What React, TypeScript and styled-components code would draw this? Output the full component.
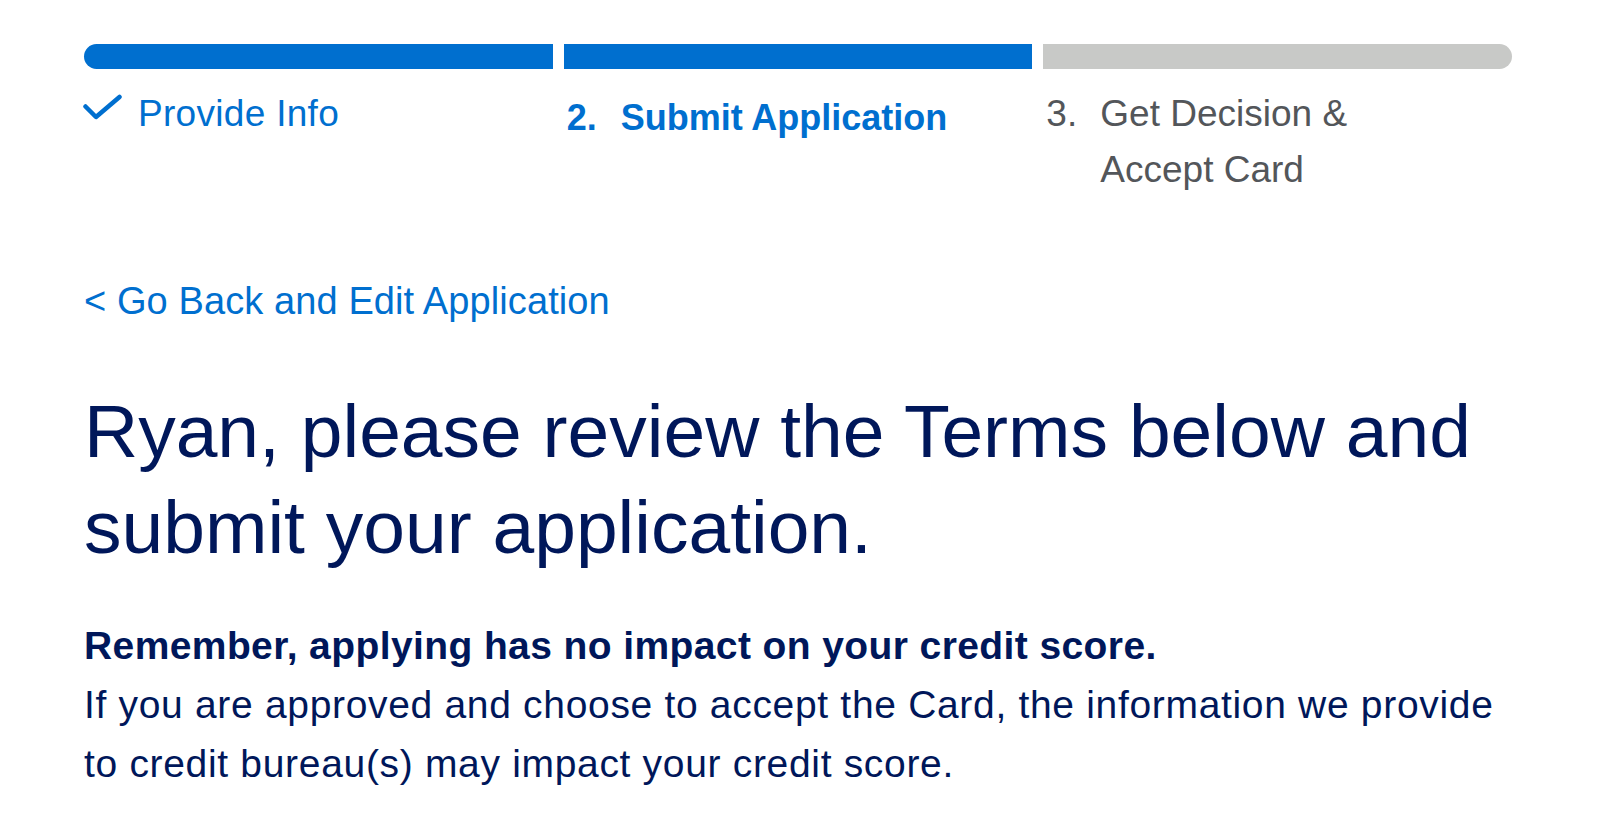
import React from "react";
import styled, { createGlobalStyle } from "styled-components";

const GlobalStyle = createGlobalStyle`
  html, body {
    margin: 0;
    padding: 0;
    background: #ffffff;
  }
  body {
    font-family: "Liberation Sans", Arial, sans-serif;
    -webkit-font-smoothing: antialiased;
  }
`;

const Page = styled.div`
  padding: 44px 88px 0 84px;
`;

const Steps = styled.div`
  display: grid;
  grid-template-columns: repeat(3, 1fr);
  column-gap: 11px;
`;

const Step = styled.div`
  display: flex;
  flex-direction: column;
`;

const Bar = styled.div<{ $done: boolean; $first?: boolean; $last?: boolean }>`
  height: 25px;
  background: ${(p) => (p.$done ? "#006fcf" : "#c8c9c7")};
  border-radius: ${(p) =>
    p.$first ? "13px 0 0 13px" : p.$last ? "0 13px 13px 0" : "0"};
`;

const Label = styled.div<{ $state: "done" | "current" | "todo" }>`
  display: flex;
  align-items: flex-start;
  margin-top: ${(p) => (p.$state === "current" ? "21px" : "17px")};
  padding-left: ${(p) => (p.$state === "done" ? "0" : "3px")};
  font-size: ${(p) => (p.$state === "current" ? "36px" : "37px")};
  font-weight: ${(p) => (p.$state === "current" ? 700 : 400)};
  letter-spacing: ${(p) => (p.$state === "done" ? "0.3px" : "0")};
  line-height: 56px;
  color: ${(p) => (p.$state === "todo" ? "#53565a" : "#006fcf")};
`;

const Marker = styled.span`
  flex: 0 0 54px;
  display: flex;
`;

const CheckIcon = styled.svg`
  margin-top: 8px;
  margin-left: -2px;
`;

const StepText = styled.span`
  flex: 1;
`;

const BackLink = styled.a`
  display: inline-block;
  margin-top: 80px;
  font-size: 38px;
  letter-spacing: 0.1px;
  line-height: 46px;
  color: #006fcf;
  text-decoration: none;
`;

const Heading = styled.h1`
  margin: 59px 0 0;
  font-size: 75px;
  font-weight: 400;
  line-height: 96px;
  color: #00175a;
`;

const Notice = styled.p`
  margin: 41px 0 0;
  font-size: 39px;
  letter-spacing: 0.68px;
  line-height: 59px;
  color: #00175a;
`;

const NoticeLead = styled.strong`
  display: block;
  font-weight: 700;
  letter-spacing: 0.4px;
`;

const Check = () => (
  <CheckIcon width="40" height="28" viewBox="0 0 40 28" fill="none">
    <polyline
      points="3.5,12.5 14,23 37.5,3"
      stroke="#006fcf"
      strokeWidth="4.5"
      strokeLinecap="round"
      strokeLinejoin="round"
    />
  </CheckIcon>
);

export default function App() {
  return (
    <Page>
      <GlobalStyle />
      <Steps>
        <Step>
          <Bar $done $first />
          <Label $state="done">
            <Marker>
              <Check />
            </Marker>
            <StepText>Provide Info</StepText>
          </Label>
        </Step>
        <Step>
          <Bar $done />
          <Label $state="current">
            <Marker>2.</Marker>
            <StepText>Submit Application</StepText>
          </Label>
        </Step>
        <Step>
          <Bar $done={false} $last />
          <Label $state="todo">
            <Marker>3.</Marker>
            <StepText>
              Get Decision &amp;
              <br />
              Accept Card
            </StepText>
          </Label>
        </Step>
      </Steps>

      <BackLink href="#">&lt; Go Back and Edit Application</BackLink>

      <Heading>Ryan, please review the Terms below and submit your application.</Heading>

      <Notice>
        <NoticeLead>Remember, applying has no impact on your credit score.</NoticeLead>
        If you are approved and choose to accept the Card, the information we provide
        to credit bureau(s) may impact your credit score.
      </Notice>
    </Page>
  );
}
